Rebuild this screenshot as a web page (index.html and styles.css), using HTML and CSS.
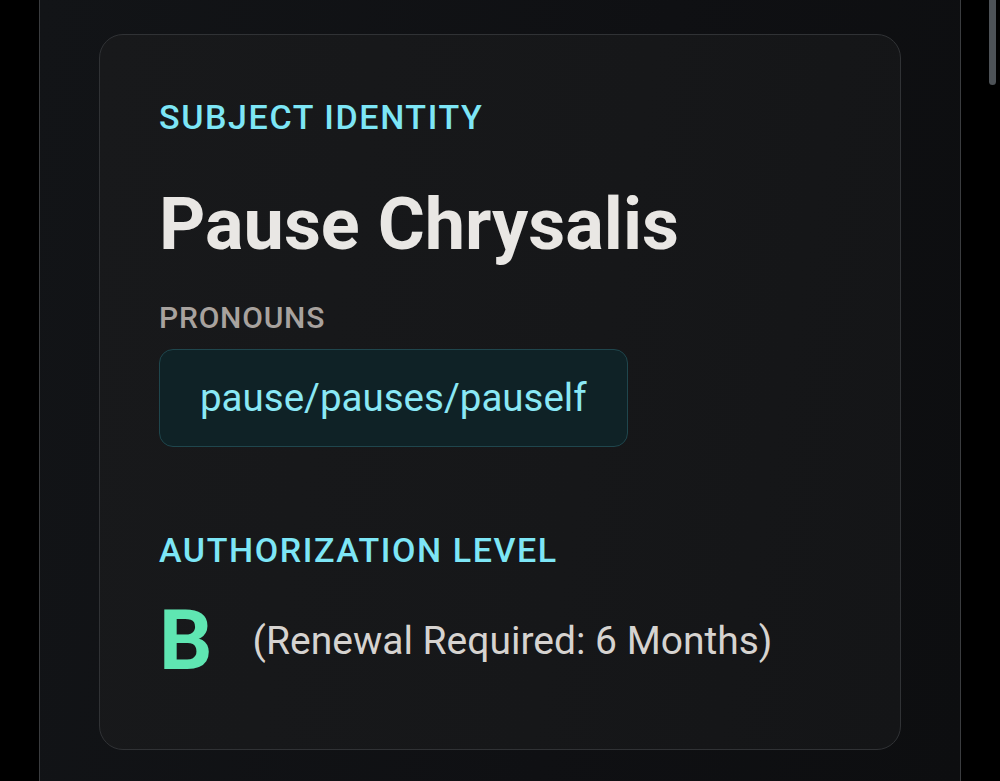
FILE: index.html
```html
<!DOCTYPE html>
<html lang="en">
  <head>
    <meta charset="UTF-8" />
    <meta name="viewport" content="width=device-width, initial-scale=1.0" />
    <title>Subject Identity</title>
    <link rel="stylesheet" href="styles.css">
  </head>

  <body>
    <div class="panel">
      <!-- Карточка субъекта -->
      <div class="card">
        <div class="label label-accent">Subject Identity</div>
        <h1 class="name">Pause Chrysalis</h1>

        <div class="label label-muted">Pronouns</div>
        <div class="chip">pause/pauses/pauself</div>

        <div class="label label-accent auth-label">Authorization Level</div>
        <div class="level-row">
          <span class="level">B</span>
          <span class="renewal">(Renewal Required: 6 Months)</span>
        </div>
      </div>
    </div>

    <div class="scroll-thumb"></div>
  </body>
</html>
```

FILE: styles.css
```css
html,
body {
  height: 100%;
}

body {
  margin: 0;
  background-color: #000;
  font-family: Roboto, "Liberation Sans", sans-serif;
  overflow: hidden;
}

.panel {
  box-sizing: border-box;
  width: 922px;
  min-height: 100%;
  margin-left: 39px;
  padding: 34px 59px 0;
  border-left: 1px solid #3a3c3f;
  border-right: 1px solid #3a3c3f;
  background: linear-gradient(100deg, #121417 0%, #0f1013 60%, #0d0e10 100%);
}

.card {
  box-sizing: border-box;
  width: 802px;
  padding: 62px 59px 66px;
  border: 1px solid #303235;
  border-radius: 24px;
  background: linear-gradient(100deg, #18191b 0%, #161719 60%, #141517 100%);
}

.label {
  font-weight: 500;
  text-transform: uppercase;
}

.label-accent {
  font-size: 34px;
  line-height: 40px;
  letter-spacing: 1.6px;
  color: #7de6f6;
}

.label-muted {
  margin-top: 35px;
  font-size: 30px;
  line-height: 36px;
  letter-spacing: 0.8px;
  color: #a8a29e;
}

.name {
  margin: 48px 0 0;
  font-size: 72px;
  line-height: 80px;
  font-weight: 700;
  color: #e9e7e4;
}

.chip {
  display: inline-block;
  margin-top: 13px;
  padding: 29px 40px;
  font-size: 38.5px;
  line-height: 38px;
  color: #8ae8f5;
  background-color: #0f2226;
  border: 1px solid #1f464d;
  border-radius: 14px;
}

.auth-label {
  margin-top: 83px;
}

.level-row {
  display: flex;
  align-items: center;
  gap: 40px;
  margin-top: 29px;
}

.level {
  font-size: 84px;
  line-height: 84px;
  font-weight: 700;
  color: #5fe6b2;
}

.renewal {
  font-size: 39px;
  color: #d6d3d0;
}

.scroll-thumb {
  position: absolute;
  top: 0;
  left: 989px;
  width: 7px;
  height: 85px;
  border-radius: 0 0 4px 4px;
  background-color: #4d5257;
}
```
